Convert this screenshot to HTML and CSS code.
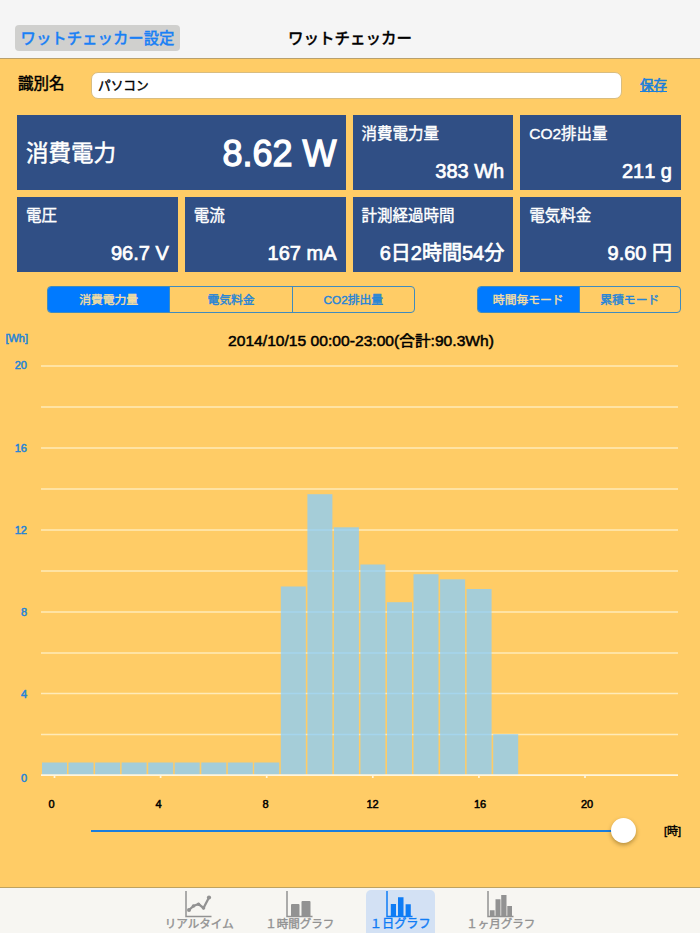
FILE: index.html
```html
<!DOCTYPE html>
<html lang="ja">
<head>
  <meta charset="UTF-8" />
  <meta name="viewport" content="width=device-width, initial-scale=1" />
  <title>ワットチェッカー</title>
  <link rel="stylesheet" href="styles.css">
</head>
<body>
  <header class="navbar">
    <button class="back-btn">ワットチェッカー設定</button>
    <h1>ワットチェッカー</h1>
  </header>

  <main class="main">
    <form class="name-row">
      <label for="deviceName">識別名</label>
      <input type="text" id="deviceName" value="パソコン" />
      <a href="#" class="save">保存</a>
    </form>

    <section class="tiles">
      <div class="tile wide"><span class="label">消費電力</span><span class="value">8.62 W</span></div>
      <div class="tile"><span class="label">消費電力量</span><span class="value">383 Wh</span></div>
      <div class="tile"><span class="label">CO2排出量</span><span class="value">211 g</span></div>
      <div class="tile"><span class="label">電圧</span><span class="value">96.7 V</span></div>
      <div class="tile"><span class="label">電流</span><span class="value">167 mA</span></div>
      <div class="tile"><span class="label">計測経過時間</span><span class="value">6日2時間54分</span></div>
      <div class="tile"><span class="label">電気料金</span><span class="value">9.60 円</span></div>
    </section>

    <div class="controls">
      <div class="segment kind">
        <button class="active">消費電力量</button>
        <button>電気料金</button>
        <button>CO2排出量</button>
      </div>
      <div class="segment mode">
        <button class="active">時間毎モード</button>
        <button>累積モード</button>
      </div>
    </div>

    <svg class="chart" width="700" height="500" viewBox="0 320 700 500">
      <text class="y-label" x="28" y="342">[Wh]</text>
      <text class="chart-title" x="361" y="346" textLength="266" lengthAdjust="spacingAndGlyphs">2014/10/15 00:00-23:00(合計:90.3Wh)</text>

      <g class="grid">
        <path d="M41 366H678M41 407H678M41 448H678M41 489H678M41 530H678M41 571H678M41 612H678M41 653H678M41 693.5H678M41 734.5H678" />
      </g>
      <g class="bars">
        <rect x="42" y="762.5" width="25" height="12.5" />
        <rect x="68.5" y="762.5" width="25" height="12.5" />
        <rect x="95.1" y="762.5" width="25" height="12.5" />
        <rect x="121.6" y="762.5" width="25" height="12.5" />
        <rect x="148.2" y="762.5" width="25" height="12.5" />
        <rect x="174.7" y="762.5" width="25" height="12.5" />
        <rect x="201.3" y="762.5" width="25" height="12.5" />
        <rect x="227.8" y="762.5" width="25" height="12.5" />
        <rect x="254.2" y="762.5" width="25" height="12.5" />
        <rect x="280.8" y="586.5" width="25" height="188.5" />
        <rect x="307.4" y="494.2" width="25" height="280.8" />
        <rect x="333.9" y="527.3" width="25" height="247.7" />
        <rect x="360.4" y="564.5" width="25" height="210.5" />
        <rect x="387" y="602.2" width="25" height="172.8" />
        <rect x="413.5" y="574.2" width="25" height="200.8" />
        <rect x="440.1" y="579.3" width="25" height="195.7" />
        <rect x="466.6" y="589" width="25" height="186" />
        <rect x="493.2" y="734.2" width="25" height="40.8" />
      </g>
      <path class="axis" d="M41 775.2H678M54.5 775V778M160.6 775V778M266.7 775V778M372.8 775V778M478.9 775V778M585 775V778" />

      <g class="y-label">
        <text x="27" y="368.5">20</text>
        <text x="27" y="451.5">16</text>
        <text x="27" y="533.5">12</text>
        <text x="27" y="616">8</text>
        <text x="27" y="698">4</text>
        <text x="27" y="782">0</text>
      </g>
      <g class="x-label">
        <text x="51.5" y="807.5">0</text>
        <text x="158.5" y="807.5">4</text>
        <text x="265.5" y="807.5">8</text>
        <text x="372.5" y="807.5">12</text>
        <text x="480" y="807.5">16</text>
        <text x="587" y="807.5">20</text>
      </g>
    </svg>

    <div class="slider-row">
      <div class="slider"><span class="knob"></span></div>
      <span class="unit">[時]</span>
    </div>
  </main>

  <nav class="tabbar">
    <a class="tab">
      <svg width="28" height="28" viewBox="0 0 28 28">
        <path class="frame" d="M1 1V26.5H26.5" />
        <path class="line" d="M4 20L8.500 16L13.500 14L18.500 18L24 7.500" />
        <circle cx="4" cy="20" r="2" /><circle cx="8.5" cy="16" r="1.8" /><circle cx="13.5" cy="14.3" r="1.8" /><circle cx="18.5" cy="18" r="1.8" /><circle cx="24" cy="7.5" r="2.1" />
      </svg>
      <span>リアルタイム</span>
    </a>
    <a class="tab">
      <svg width="28" height="28" viewBox="0 0 28 28">
        <path class="frame" d="M1 1V26.5H26.5" />
        <path d="M5 15Q5 14 6 14H12.5Q13.5 14 13.5 15V27H5ZM15.5 12Q15.5 11 16.5 11H23.500Q24.500 11 24.500 12V27H15.500Z" />
      </svg>
      <span>１時間グラフ</span>
    </a>
    <a class="tab active">
      <svg width="28" height="28" viewBox="0 0 28 28">
        <path class="frame" d="M1 1V26.5H26.5" />
        <path d="M4.800 14H10V27H4.800ZM12 7.300H17.500V27H12ZM19.600 14.300H24.800V27H19.600Z" />
      </svg>
      <span>１日グラフ</span>
    </a>
    <a class="tab">
      <svg width="28" height="28" viewBox="0 0 28 28">
        <path class="frame" d="M1 1V26.5H26.5" />
        <path d="M2.800 20.200H7.600V27H2.800ZM8.500 9.200H13.500V27H8.500ZM14.200 5H19.500V27H14.200ZM20.300 16H25V27H20.300Z" />
      </svg>
      <span>１ヶ月グラフ</span>
    </a>
  </nav>
</body>
</html>
```
FILE: styles.css
```css
* { box-sizing: border-box; }
body {
  margin: 0;
  width: 700px;
  height: 933px;
  display: flex;
  flex-direction: column;
  overflow: hidden;
  background-color: #fc6;
  color: #000;
  font-family: 'Liberation Sans', 'Noto Sans CJK JP', sans-serif;
  font-kerning: none;
}
button, input {
  font-family: inherit;
}
.navbar {
  height: 59px;
  flex: none;
  display: grid;
  grid-template-columns: 1fr auto 1fr;
  align-items: start;
  padding: 25px 15px 0;
  background-color: #f5f5f5;
  border-bottom: 1px solid #b9a06c;
}
.back-btn {
  justify-self: start;
  width: 165px;
  height: 26px;
  padding: 1px 0 0;
  border: none;
  border-radius: 4px;
  background-color: #d0d0ce;
  color: #1a80f5;
  font-size: 15.4px;
  line-height: 25px;
  font-weight: 500;
  -webkit-text-stroke: 0.3px;
}
.navbar h1 {
  margin: 0;
  padding-top: 1px;
  font-size: 15.5px;
  line-height: 26px;
  font-weight: 500;
  -webkit-text-stroke: 0.3px;
}
.main {
  flex: 1;
}
.name-row {
  display: flex;
  height: 56px;
  padding: 13px 32px 0 18px;
}
.name-row label {
  width: 73px;
  font-size: 15.5px;
  line-height: 24px;
  -webkit-text-stroke: 0.5px;
}
.name-row input {
  width: 531px;
  height: 27px;
  padding: 0 6px 3px;
  border: 1px solid #d9bd80;
  border-radius: 7px;
  background-color: #fff;
  color: #000;
  font-size: 12.7px;
  -webkit-text-stroke: 0.4px;
}
.save {
  margin-left: 18px;
  color: #1a7fdc;
  font-size: 13.5px;
  line-height: 27px;
  -webkit-text-stroke: 0.6px;
}
.tiles {
  display: grid;
  grid-template-columns: repeat(4, 1fr);
  grid-auto-rows: 75px;
  gap: 7px;
  padding: 0 19px 0 17px;
}
.tile {
  display: flex;
  flex-direction: column;
  justify-content: space-between;
  padding: 8px 9px 5px;
  background-color: #304f85;
  color: #fff;
  white-space: nowrap;
}
.tile .label {
  font-size: 15.5px;
  line-height: 22px;
  -webkit-text-stroke: 0.4px;
}
.tile .value {
  align-self: flex-end;
  font-size: 20px;
  line-height: 28px;
  -webkit-text-stroke: 0.7px;
}
.tile.wide {
  grid-column: span 2;
  flex-direction: row;
  align-items: center;
  padding: 2px 9px 0 9px;
}
.tile.wide .label {
  font-size: 22.5px;
  line-height: 34px;
  -webkit-text-stroke: 0.5px;
}
.tile.wide .value {
  align-self: center;
  font-size: 36px;
  line-height: 44px;
  -webkit-text-stroke: 1.3px;
}
.controls {
  display: flex;
  justify-content: space-between;
  align-items: flex-end;
  height: 41px;
  padding: 0 19px 0 47px;
}
.segment {
  display: flex;
  height: 27px;
  border: 1px solid #408bbd;
  border-radius: 4px;
  overflow: hidden;
}
.segment button {
  flex: 1;
  padding: 0 0 3px;
  border: none;
  border-left: 1px solid #408bbd;
  background: none;
  color: #2484d8;
  font-size: 11.8px;
  -webkit-text-stroke: 0.4px;
}
.segment button:first-child {
  border-left: none;
}
.segment .active {
  background-color: #007aff;
  color: #f3dda2;
}
.kind {
  width: 368px;
}
.mode {
  width: 204px;
}
.chart {
  display: block;
  margin-top: 7px;
}
.chart-title {
  text-anchor: middle;
  font-size: 15px;
  stroke: #000;
  stroke-width: 0.5px;
}
.grid path {
  stroke: #ffeab8;
  stroke-width: 1.7;
}
.bars rect {
  fill: #87ceff;
  fill-opacity: 0.75;
}
.axis {
  fill: none;
  stroke: #fff5dc;
  stroke-width: 1.7;
}
.y-label {
  text-anchor: end;
  font-size: 11px;
  fill: #2484d8;
  stroke: #2484d8;
  stroke-width: 0.5px;
}
.x-label {
  text-anchor: middle;
  font-size: 11px;
  stroke: #000;
  stroke-width: 0.5px;
}
.slider-row {
  display: flex;
  align-items: center;
  height: 22px;
  padding-left: 91px;
}
.slider {
  display: flex;
  align-items: center;
  justify-content: flex-end;
  width: 545px;
  height: 2px;
  background: linear-gradient(to right, #1a7ddd 533px, transparent 533px);
}
.knob {
  width: 25px;
  height: 25px;
  margin-bottom: 1px;
  border-radius: 50%;
  background-color: #fff;
  box-shadow: 0 2px 4px rgba(70, 50, 0, 0.4);
}
.unit {
  margin-left: 28px;
  padding-bottom: 3px;
  font-size: 11px;
  -webkit-text-stroke: 0.4px;
}
.tabbar {
  flex: none;
  display: flex;
  justify-content: center;
  gap: 31.5px;
  height: 46px;
  padding-top: 2px;
  border-top: 1px solid #bea25f;
  background-color: #f7f6f2;
}
.tab {
  display: flex;
  flex-direction: column;
  align-items: center;
  width: 69px;
  border-radius: 5px 5px 0 0;
  color: #929292;
  fill: currentColor;
  white-space: nowrap;
}
.tab.active {
  background-color: #d3e1f4;
  color: #0f7cf5;
}
.tab svg {
  display: block;
  flex: none;
}
.tab .frame {
  fill: none;
  stroke: currentColor;
  stroke-width: 1.5;
}
.tab .line {
  fill: none;
  stroke: currentColor;
  stroke-width: 2.3;
}
.tab span {
  font-size: 11.5px;
  line-height: 14px;
  margin-top: -1px;
  -webkit-text-stroke: 0.4px;
}
.tab.active span {
  font-size: 12.2px;
}
```
